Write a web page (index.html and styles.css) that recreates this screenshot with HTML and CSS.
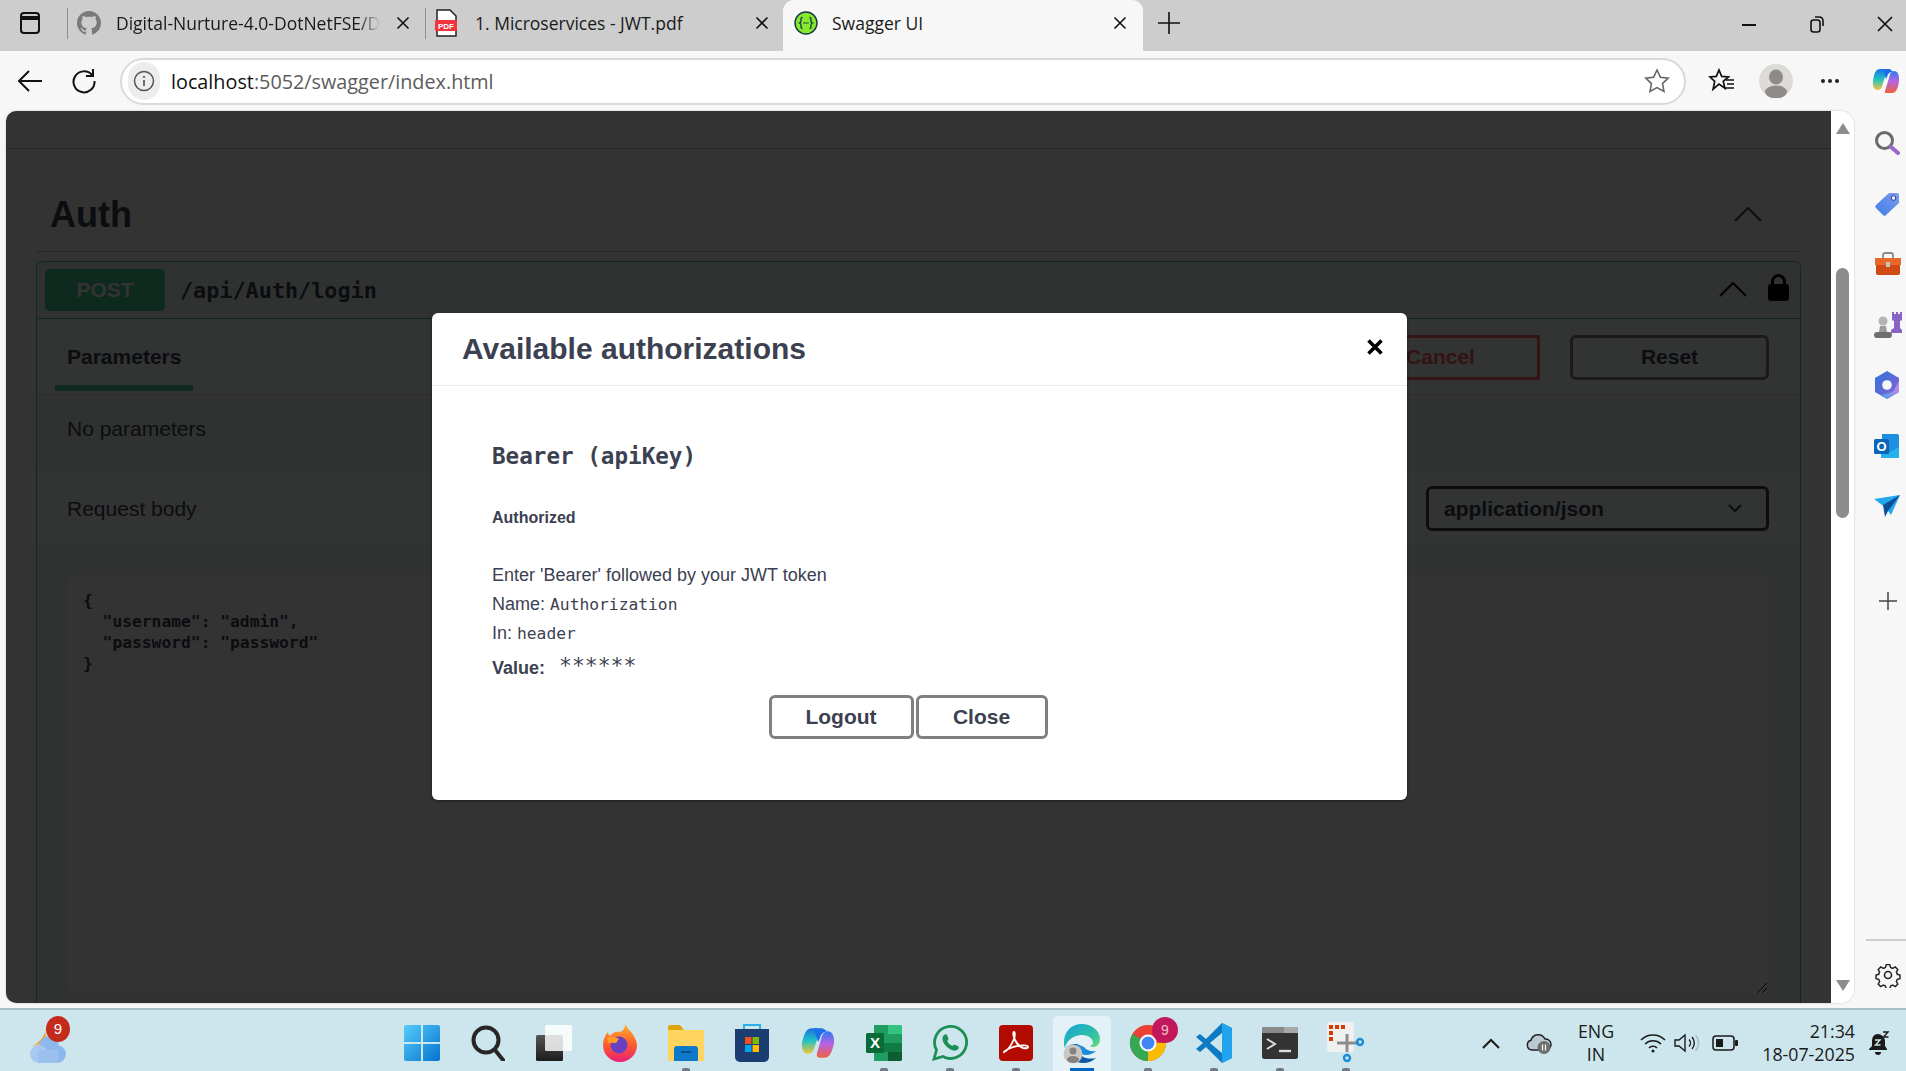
FILE: index.html
```html
<!DOCTYPE html>
<html lang="en">
<head>
  <meta charset="UTF-8" />
  <title>Swagger UI</title>
  <link rel="stylesheet" href="styles.css">
</head>
<body>

  <!-- Tab strip -->
  <div class="tabstrip">
    <div class="strip-btn">
      <svg width="22" height="24" viewBox="0 0 22 24" fill="none" stroke="#111" stroke-width="2"><rect x="2" y="2" width="18" height="20" rx="3"/><path d="M2 7h18" stroke-width="4"/></svg>
    </div>
    <div class="tab-sep"></div>
    <div class="tab tab-git">
      <svg class="tab-icon" width="24" height="24" viewBox="0 0 16 16" fill="#7a7a7a"><path d="M8 0C3.58 0 0 3.58 0 8c0 3.54 2.29 6.53 5.47 7.59.4.07.55-.17.55-.38 0-.19-.01-.82-.01-1.49-2.01.37-2.53-.49-2.69-.94-.09-.23-.48-.94-.82-1.13-.28-.15-.68-.52-.01-.53.63-.01 1.08.58 1.23.82.72 1.21 1.87.87 2.33.66.07-.52.28-.87.51-1.07-1.78-.2-3.64-.89-3.64-3.95 0-.87.31-1.59.82-2.15-.08-.2-.36-1.02.08-2.12 0 0 .67-.21 2.2.82.64-.18 1.32-.27 2-.27s1.36.09 2 .27c1.53-1.04 2.2-.82 2.2-.82.44 1.1.16 1.92.08 2.12.51.56.82 1.27.82 2.15 0 3.07-1.87 3.75-3.65 3.95.29.25.54.73.54 1.48 0 1.07-.01 1.93-.01 2.2 0 .21.15.46.55.38A8.013 8.013 0 0016 8c0-4.42-3.58-8-8-8z"/></svg>
      <span class="tab-title tab-fade">Digital-Nurture-4.0-DotNetFSE/D</span>
      <svg class="tab-x" width="14" height="14" viewBox="0 0 14 14" stroke="#111" stroke-width="1.6"><path d="M1.5 1.5l11 11M12.5 1.5l-11 11"/></svg>
    </div>
    <div class="tab-sep"></div>
    <div class="tab tab-pdf">
      <svg class="tab-icon" width="24" height="28" viewBox="0 0 24 28"><path d="M3 1h13l6 6v20H3z" fill="#fff" stroke="#222" stroke-width="1.5"/><rect x="1" y="11" width="22" height="11" rx="1" fill="#f0353f"/><text x="12" y="20" class="pdf-mark">PDF</text></svg>
      <span class="tab-title">1. Microservices - JWT.pdf</span>
      <svg class="tab-x" width="14" height="14" viewBox="0 0 14 14" stroke="#111" stroke-width="1.6"><path d="M1.5 1.5l11 11M12.5 1.5l-11 11"/></svg>
    </div>
    <div class="tab tab-active">
      <svg class="tab-icon" width="24" height="24" viewBox="0 0 24 24"><circle cx="12" cy="12" r="11" fill="#85ea2d" stroke="#173647" stroke-width="1.4"/><path d="M8.5 6.5c-2 0-1.5 2-1.5 3.5s-1.5 2-1.5 2 1.5.5 1.5 2-.5 3.5 1.5 3.5M15.5 6.5c2 0 1.5 2 1.5 3.5s1.5 2 1.5 2-1.5.5-1.5 2 .5 3.5-1.5 3.5" fill="none" stroke="#173647" stroke-width="1.3"/><path d="M9.5 12h5" stroke="#173647" stroke-width="1.6" stroke-dasharray="1.2 .8"/></svg>
      <span class="tab-title">Swagger UI</span>
      <svg class="tab-x" width="14" height="14" viewBox="0 0 14 14" stroke="#111" stroke-width="1.6"><path d="M1.5 1.5l11 11M12.5 1.5l-11 11"/></svg>
    </div>
    <svg class="new-tab" width="22" height="22" viewBox="0 0 22 22" stroke="#111" stroke-width="1.6"><path d="M11 0v22M0 11h22"/></svg>
    <div class="win-ctrls">
      <svg width="16" height="16" viewBox="0 0 16 16" stroke="#111" stroke-width="2"><path d="M1 9h14"/></svg>
      <svg width="16" height="18" viewBox="0 0 16 18" fill="none" stroke="#111" stroke-width="1.6"><rect x="2" y="5" width="9" height="12" rx="2.5"/><path d="M6 2h4c3 0 4 1 4 4v5"/></svg>
      <svg width="16" height="16" viewBox="0 0 16 16" stroke="#111" stroke-width="1.7"><path d="M1 1l14 14M15 1L1 15"/></svg>
    </div>
  </div>

  <!-- Toolbar -->
  <div class="toolbar">
    <svg class="tool-back" width="26" height="24" viewBox="0 0 26 24" fill="none" stroke="#111" stroke-width="2"><path d="M25 12H2M12 2L2 12l10 10"/></svg>
    <svg class="tool-reload" width="26" height="26" viewBox="0 0 26 26" fill="none" stroke="#111" stroke-width="2"><path d="M21 7a10.5 10.5 0 1 0 2.5 6"/><path d="M22 1v7h-7"/></svg>
    <div class="address">
      <div class="site-info">
        <svg width="22" height="22" viewBox="0 0 22 22" fill="none" stroke="#555" stroke-width="1.5"><circle cx="11" cy="11" r="9.5"/><path d="M11 10v6M11 6v2" stroke-width="1.7"/></svg>
      </div>
      <span class="url"><span class="url-host">localhost</span>:5052/swagger/index.html</span>
      <svg class="star" width="26" height="26" viewBox="0 0 26 26" fill="none" stroke="#666" stroke-width="1.6"><path d="M13 2l3.4 7.2 7.8 1-5.7 5.4 1.5 7.8-7-3.8-7 3.8 1.5-7.8L1.8 10.2l7.8-1z"/></svg>
    </div>
    <svg class="tool-fav" width="28" height="28" viewBox="0 0 28 28" fill="none" stroke="#111" stroke-width="1.7"><path d="M11 3l2.7 6.4 6.8.6-5.2 4.4 1.6 6.8L11 17l-5.9 5.2 1.6-7.8L2 10l6.3-.6z"/><path d="M18 13h8M19 17h7M17 21h9"/></svg>
    <div class="profile">
      <svg width="34" height="34" viewBox="0 0 34 34"><circle cx="17" cy="17" r="17" fill="#dcdbd8"/><ellipse cx="17" cy="13" rx="7" ry="7.5" fill="#8f8b86"/><ellipse cx="17" cy="28" rx="11" ry="6.5" fill="#8f8b86"/></svg>
    </div>
    <div class="more"><span></span><span></span><span></span></div>
    <svg class="copilot" width="34" height="34" viewBox="0 0 34 34" fill="none">
      <defs>
        <linearGradient id="cpA" x1="0" y1="0" x2="0" y2="1"><stop offset="0" stop-color="#1c6fe8"/><stop offset=".5" stop-color="#22c4c4"/><stop offset="1" stop-color="#f4c430"/></linearGradient>
        <linearGradient id="cpB" x1="0" y1="0" x2="0" y2="1"><stop offset="0" stop-color="#2a7cf0"/><stop offset=".45" stop-color="#b264e8"/><stop offset="1" stop-color="#f2603c"/></linearGradient>
      </defs>
      <path d="M11 5c-4 0-6 4-7 12-.6 5 1 9 5 9 3 0 4-3 5-7l4-12c.6-2-.5-2-2-2z" fill="url(#cpA)"/>
      <path d="M23 29c4 0 6-4 7-12 .6-5-1-10-5-10-3 0-4 3-5 7l-4 13c-.6 2 .5 2 2 2z" fill="url(#cpB)"/>
      <path d="M14 5h7l3 3c-3 0-5 1-6 5l-1 2z" fill="#1c6fe8"/>
    </svg>
  </div>

  <!-- Browser content -->
  <div class="viewport">
    <div class="frame">
      <div class="page">
        <div class="page-top"></div>
        <div class="wrapper">
          <div class="tag-row">
            <h3 class="tag-title">Auth</h3>
            <svg class="tag-chev" width="28" height="15" viewBox="0 0 28 15" fill="none" stroke="#3b4151" stroke-width="2"><path d="M1 14L14 1l13 13"/></svg>
          </div>
          <div class="opblock">
            <div class="op-summary">
              <span class="op-method">POST</span>
              <span class="op-path">/api/Auth/login</span>
              <svg class="op-chev" width="28" height="15" viewBox="0 0 28 15" fill="none" stroke="#000" stroke-width="2"><path d="M1 14L14 1l13 13"/></svg>
              <svg class="op-lock" width="21" height="27" viewBox="0 0 21 27"><path d="M4.5 12V7.5a6 6 0 0 1 12 0V12" fill="none" stroke="#000" stroke-width="3"/><rect y="10" width="21" height="17" rx="3" fill="#000"/></svg>
            </div>
            <div class="section-head params-head">
              <div class="params-tab">Parameters</div>
              <div class="btn-group">
                <button class="sw-btn sw-cancel">Cancel</button>
                <button class="sw-btn">Reset</button>
              </div>
            </div>
            <div class="no-params">No parameters</div>
            <div class="section-head body-head">
              <span>Request body</span>
              <div class="media-select">
                <span>application/json</span>
                <svg width="14" height="9" viewBox="0 0 14 9" fill="none" stroke="#3b4151" stroke-width="2.2"><path d="M1 1l6 6 6-6"/></svg>
              </div>
            </div>
            <div class="body-wrap">
              <div class="body-code">
<pre>{
  "username": "admin",
  "password": "password"
}</pre>
                <svg class="resize-grip" width="12" height="12" viewBox="0 0 12 12" stroke="#222" stroke-width="1"><path d="M1 11L11 1M6 11l5-5"/></svg>
              </div>
            </div>
          </div>
        </div>

        <div class="backdrop"></div>

        <!-- Auth dialog -->
        <div class="modal">
          <div class="modal-head">
            <h3 class="modal-title">Available authorizations</h3>
            <svg class="modal-x" width="18" height="18" viewBox="0 0 18 18" stroke="#000" stroke-width="3.6"><path d="M2.5 2.5l13 13M15.5 2.5l-13 13"/></svg>
          </div>
          <div class="modal-body">
            <h4 class="scheme">Bearer (apiKey)</h4>
            <h6 class="authorized">Authorized</h6>
            <p class="desc">Enter 'Bearer' followed by your JWT token</p>
            <p class="meta">Name: <code>Authorization</code></p>
            <p class="meta">In: <code>header</code></p>
            <div class="value-row">
              <label>Value:</label>
              <code class="stars">******</code>
            </div>
            <div class="modal-btns">
              <button class="modal-btn btn-logout">Logout</button>
              <button class="modal-btn btn-close">Close</button>
            </div>
          </div>
        </div>
      </div>

      <div class="scrollbar">
        <div class="arrow-up"></div>
        <div class="thumb"></div>
        <div class="arrow-down"></div>
      </div>
    </div>

    <!-- Edge sidebar -->
    <div class="sidebar">
      <div class="side-cell">
        <svg width="26" height="26" viewBox="0 0 26 26" fill="none"><circle cx="10.5" cy="10.5" r="8" stroke="#6b6b6b" stroke-width="3"/><path d="M17 17l7 6" stroke="#9a68cc" stroke-width="4" stroke-linecap="round"/></svg>
      </div>
      <div class="side-cell">
        <svg width="26" height="26" viewBox="0 0 26 26"><defs><linearGradient id="tagG" x1="0" y1="1" x2="1" y2="0"><stop offset="0" stop-color="#3f7fe6"/><stop offset="1" stop-color="#7f9bf0"/></linearGradient></defs><path d="M15 2h8a2 2 0 0 1 2 2v8L12 24a2 2 0 0 1-3 0l-7-7a2 2 0 0 1 0-3z" fill="url(#tagG)"/><circle cx="19.5" cy="7" r="2.3" fill="#e8ecff" stroke="#2e3f8f" stroke-width="1"/></svg>
      </div>
      <div class="side-cell">
        <svg width="28" height="24" viewBox="0 0 28 24"><path d="M9 6V3a2 2 0 0 1 2-2h6a2 2 0 0 1 2 2v3" fill="none" stroke="#8a8a8a" stroke-width="1.8"/><path d="M1 6h26v7H1z" fill="#e8672c"/><path d="M2 13h24v8a2 2 0 0 1-2 2H4a2 2 0 0 1-2-2z" fill="#cf4a14"/><rect x="12" y="10" width="4" height="5" fill="#c4c4c4"/></svg>
      </div>
      <div class="side-cell">
        <svg width="28" height="28" viewBox="0 0 28 28"><path d="M18 1h2v2h2V1h2v2h2V1h2v8l-2 1v7l2 2v3H17v-3l3-2v-7l-2-1z" fill="#8a64c4"/><circle cx="9" cy="10" r="4.5" fill="#b4b4b4"/><path d="M6 15h6l1 6H5z" fill="#9c9c9c"/><rect y="21" width="18" height="6" rx="3" fill="#6e6e6e"/></svg>
      </div>
      <div class="side-cell">
        <svg width="26" height="28" viewBox="0 0 26 28"><defs><linearGradient id="m3A" x1="0" y1="0" x2="1" y2="1"><stop offset="0" stop-color="#2f74d8"/><stop offset="1" stop-color="#8a5fd8"/></linearGradient><linearGradient id="m3B" x1="0" y1="0" x2="1" y2="0"><stop offset="0" stop-color="#3aa3e8"/><stop offset="1" stop-color="#c088e8"/></linearGradient></defs><path d="M13 0l12 7v14l-12 7-12-7V7z" fill="url(#m3A)"/><path d="M25 10v11l-12 7-6-3.5 12-4z" fill="url(#m3B)"/><circle cx="13" cy="14" r="4.8" fill="#f7f7f7"/></svg>
      </div>
      <div class="side-cell">
        <svg width="26" height="26" viewBox="0 0 26 26"><path d="M8 1h15a2 2 0 0 1 2 2v21a1 1 0 0 1-1 1H8z" fill="#1d8fe0"/><path d="M7 14l9 5 9-5v11H7z" fill="#27b0ee"/><rect y="6" width="15" height="15" rx="1.5" fill="#0a64b8"/><text x="7.5" y="17.5" class="outlook-mark">O</text></svg>
      </div>
      <div class="side-cell">
        <svg width="26" height="22" viewBox="0 0 26 22"><path d="M0 4l26-4-9 20-5-7z" fill="#22a8ee"/><path d="M26 0L9 10l2 12 3-6z" fill="#0b4f96"/></svg>
      </div>
      <div class="side-plus">
        <svg width="18" height="18" viewBox="0 0 18 18" stroke="#444" stroke-width="1.5"><path d="M9 0v18M0 9h18"/></svg>
      </div>
      <div class="side-line"></div>
      <div class="side-gear">
        <svg width="26" height="26" viewBox="0 0 26 26" fill="none" stroke="#222" stroke-width="1.6"><circle cx="13" cy="13" r="3.5"/><path d="M11 1.5h4l.8 3.2 2.4 1 2.9-1.6 2.8 2.8-1.6 2.9 1 2.4 3 .8v4l-3 .8-1 2.4 1.6 2.9-2.8 2.8-2.9-1.6-2.4 1-.8 3h-4l-.8-3-2.4-1-2.9 1.6-2.8-2.8 1.6-2.9-1-2.4-3-.8v-4l3-.8 1-2.4-1.6-2.9 2.8-2.8 2.9 1.6 2.4-1z" transform="translate(1.3 1.3) scale(.9)"/></svg>
      </div>
    </div>
  </div>

  <!-- Windows taskbar -->
  <div class="taskbar">
    <div class="weather">
      <svg width="38" height="38" viewBox="0 0 38 38"><path d="M18 0a11 11 0 0 0 3 15L1 21c7-2 15-10 17-21z" fill="#f6a623"/><circle cx="20" cy="20" r="10" fill="#8db8ee"/><circle cx="10" cy="28" r="9" fill="#a7c8f3"/><circle cx="28" cy="28" r="9" fill="#8db8ee"/><rect x="9" y="24" width="20" height="13" fill="#9cc1f1"/></svg>
      <span class="badge badge-red">9</span>
    </div>
    <div class="dock">
      <div class="dock-item">
        <svg width="36" height="36" viewBox="0 0 36 36"><defs><linearGradient id="winG" x1="0" y1="0" x2="1" y2="1"><stop offset="0" stop-color="#55cdfb"/><stop offset="1" stop-color="#0473cf"/></linearGradient></defs><path d="M2 0h15v17H0V2a2 2 0 0 1 2-2zM19 0h15a2 2 0 0 1 2 2v15H19zM0 19h17v17H2a2 2 0 0 1-2-2zM19 19h17v15a2 2 0 0 1-2 2H19z" fill="url(#winG)"/></svg>
      </div>
      <div class="dock-item">
        <svg width="34" height="36" viewBox="0 0 34 36" fill="none" stroke="#262626"><circle cx="15" cy="15" r="12.5" stroke-width="4"/><path d="M24 25l8 10" stroke-width="4" stroke-linecap="round"/></svg>
      </div>
      <div class="dock-item">
        <svg width="36" height="36" viewBox="0 0 36 36"><defs><linearGradient id="tvG" x1="0" y1="0" x2="0" y2="1"><stop offset="0" stop-color="#555"/><stop offset="1" stop-color="#1c1c1c"/></linearGradient></defs><rect y="10" width="27" height="26" rx="1.5" fill="url(#tvG)"/><rect x="9" y="0" width="27" height="26" rx="1.5" fill="#fff" fill-opacity=".82"/></svg>
      </div>
      <div class="dock-item">
        <svg width="34" height="38" viewBox="0 0 34 38"><defs><linearGradient id="ffG" x1="0" y1="0" x2="0" y2="1"><stop offset="0" stop-color="#ffb02e"/><stop offset=".55" stop-color="#ff5a2c"/><stop offset="1" stop-color="#e81e78"/></linearGradient></defs><path d="M22 0c2 3 3 5 7 9 4 6 5 10 5 12 0 10-8 17-17 17S0 31 0 21c0-5 2-10 5-13 0 2 1 3 2 4 2-3 6-5 9-4 3 0 6-3 6-8z" fill="url(#ffG)"/><circle cx="16" cy="21" r="8.5" fill="#6a3fc4"/><path d="M4 15c4-3 9-2 12 0l-3 4c-3 0-5-1-7 1z" fill="#ff9d28"/></svg>
      </div>
      <div class="dock-item">
        <svg width="36" height="36" viewBox="0 0 36 36"><path d="M0 2a2 2 0 0 1 2-2h10l4 5H0z" fill="#dfa511"/><path d="M0 5h36v31H0z" fill="#ffd45f"/><path d="M6 36V24a3 3 0 0 1 3-3h18a3 3 0 0 1 3 3v12z" fill="#0f79c9"/><rect x="13" y="26" width="10" height="2" fill="#0a4f8c"/></svg>
      </div>
      <div class="dock-item">
        <svg width="34" height="38" viewBox="0 0 34 38"><path d="M9 5V1h16v4" fill="none" stroke="#2cb2ea" stroke-width="2"/><path d="M0 5h34v28a5 5 0 0 1-5 5H5a5 5 0 0 1-5-5z" fill="#1b3d72"/><path d="M10 13h6.5v7H10z" fill="#f25022"/><path d="M17.5 13H24v7h-6.5z" fill="#7fba00"/><path d="M10 21h6.5v7H10z" fill="#00a4ef"/><path d="M17.5 21H24v7h-6.5z" fill="#ffb900"/></svg>
      </div>
      <div class="dock-item">
        <svg width="36" height="36" viewBox="0 0 34 34" fill="none"><defs><linearGradient id="cpC" x1="0" y1="0" x2="0" y2="1"><stop offset="0" stop-color="#1c6fe8"/><stop offset=".5" stop-color="#22c4c4"/><stop offset="1" stop-color="#f4c430"/></linearGradient><linearGradient id="cpD" x1="0" y1="0" x2="0" y2="1"><stop offset="0" stop-color="#2a7cf0"/><stop offset=".45" stop-color="#b264e8"/><stop offset="1" stop-color="#f2603c"/></linearGradient></defs><path d="M11 3c-5 0-7 5-9 13-1 6 1 11 6 11 3 0 5-3 6-7l4-12c.6-2-.5-5-2-5z" fill="url(#cpC)"/><path d="M23 31c5 0 7-5 9-13 1-6-1-12-6-12-3 0-5 3-6 7l-4 14c-.6 2 .5 4 2 4z" fill="url(#cpD)"/><path d="M13 3h8l5 3c-3 0-6 2-7 6l-2 4z" fill="#1c6fe8"/></svg>
      </div>
      <div class="dock-item">
        <svg width="36" height="36" viewBox="0 0 36 36"><path d="M8 0h26a2 2 0 0 1 2 2v32a2 2 0 0 1-2 2H8z" fill="#1f9d60"/><path d="M22 0h12a2 2 0 0 1 2 2v7H22z" fill="#33c481"/><path d="M8 18h28v9H8z" fill="#107c41"/><path d="M22 27h14v7a2 2 0 0 1-2 2H22z" fill="#0d5c32"/><rect y="8" width="18" height="20" rx="1.5" fill="#0b6b38"/><text x="9" y="23" class="excel-mark">X</text></svg>
      </div>
      <div class="dock-item">
        <svg width="36" height="36" viewBox="0 0 36 36" fill="none"><path d="M2 34l2.5-9A16 16 0 1 1 11 31.5z" stroke="#1b8f55" stroke-width="2.8"/><path d="M12 10c1-1 2.5-1 3 0l1.5 3.5c.2.6-.2 1.2-1.3 2.5 1 2.2 3 4 5 5 1.3-1 2-1.5 2.6-1.3l3.2 1.6c1 .6 1 2 0 3-1.8 1.8-4.5 1.7-7.5.3-3-1.5-6-4.5-7.3-7.5-1.2-2.8-1-5.5.8-7.1z" fill="#1b8f55"/></svg>
      </div>
      <div class="dock-item">
        <svg width="34" height="36" viewBox="0 0 34 36"><rect width="34" height="36" rx="4" fill="#b30b00"/><path d="M5 27c3-1 7-6 10-13 1-3 1-7 0-7s-1 4 1 8c2 4 5 7 8 8 2 .5 5 .5 5-1 0-2-6-2-11-1-6 1-13 5-13 6z" fill="none" stroke="#fff" stroke-width="1.9"/></svg>
      </div>
      <div class="dock-item dock-active">
        <svg width="38" height="42" viewBox="0 0 38 42"><defs><linearGradient id="edG" x1="0" y1="0" x2="1" y2="1"><stop offset="0" stop-color="#11a3d8"/><stop offset=".7" stop-color="#37c5a0"/><stop offset="1" stop-color="#6fe36a"/></linearGradient></defs><path d="M19 1C8 1 1 9 1 19c0 2 0 4 1 6 2-8 9-13 17-13 7 0 11 4 11 8 0 1-1 2-3 3 3 2 10 1 10-7C37 8 29 1 19 1z" fill="url(#edG)"/><path d="M3 26c2 9 9 14 17 14 5 0 10-2 13-5-4 1-11 1-14-2-4-3-5-8-5-12-5 0-10 1-11 5z" fill="#0c59a4"/><path d="M14 21c0 6 3 11 9 11 4 0 8-2 10-4-5 1-10-1-12-4z" fill="#1a8cd8"/><circle cx="10" cy="31" r="9.5" fill="#c9c7c4"/><circle cx="10" cy="28" r="3.5" fill="#85817c"/><ellipse cx="10" cy="36.5" rx="6" ry="3.5" fill="#85817c"/></svg>
      </div>
      <div class="dock-item">
        <span class="chrome-wrap">
          <svg width="38" height="38" viewBox="0 0 38 38"><circle cx="19" cy="19" r="18" fill="#ea4335"/><path d="M19 19L3.4 10A18 18 0 0 0 19 37l9-15z" fill="#34a853"/><path d="M19 19h18A18 18 0 0 1 19 37z" fill="#fbbc04"/><circle cx="19" cy="19" r="8.5" fill="#fff"/><circle cx="19" cy="19" r="6.5" fill="#4285f4"/></svg>
          <span class="badge badge-pink">9</span>
        </span>
      </div>
      <div class="dock-item">
        <svg width="36" height="40" viewBox="0 0 36 40"><path d="M26 0l10 5v30l-10 5L10 24l-6 5-4-3 7-6-7-6 4-3 6 5z" fill="#0d7ac4"/><path d="M26 10v20l-12-10zM26 0l10 5v30l-10 5z" fill="#22a3ee"/><path d="M26 10v20l-12-10z" fill="#cde6ed"/></svg>
      </div>
      <div class="dock-item">
        <svg width="36" height="32" viewBox="0 0 36 32"><rect width="36" height="32" rx="2.5" fill="#333"/><path d="M0 2.5A2.5 2.5 0 0 1 2.5 0H22v6H0z" fill="#8a8a8a"/><path d="M22 0h11.5A2.5 2.5 0 0 1 36 2.5V6H22z" fill="#a8a8a8"/><path d="M5 12l8 5-8 5" fill="none" stroke="#ddd" stroke-width="2"/><path d="M17 24h12" stroke="#ddd" stroke-width="2.4"/></svg>
      </div>
      <div class="dock-item">
        <svg width="38" height="42" viewBox="0 0 38 42" fill="none"><rect width="27" height="30" rx="3" fill="#f0f0f0"/><path d="M2 3h4v4H2zM8 3h4v4H8zM14 3h4v4h-4zM2 9h4v4H2zM2 15h4v4H2z" fill="#d83b01"/><path d="M10 21h22" stroke="#8c8c8c" stroke-width="3"/><path d="M20 12v18" stroke="#8c8c8c" stroke-width="3"/><circle cx="33" cy="20" r="3" stroke="#1a8cd8" stroke-width="2.4"/><circle cx="20" cy="36" r="3" stroke="#1a8cd8" stroke-width="2.4"/></svg>
      </div>
    </div>
    <div class="tray">
      <div class="tray-chev">
        <svg width="18" height="11" viewBox="0 0 18 11" fill="none" stroke="#1a1a1a" stroke-width="2"><path d="M1 10l8-8 8 8"/></svg>
      </div>
      <div class="tray-cloud">
        <svg width="26" height="22" viewBox="0 0 26 22"><path d="M6 18a5 5 0 0 1-1-9.8A7.5 7.5 0 0 1 19 7a5.5 5.5 0 0 1 1 11z" fill="#b8cbd0" stroke="#222" stroke-width="1.5"/><circle cx="18" cy="15.5" r="6.5" fill="#6d6d6d"/><path d="M16.5 12.5v6M19.5 12.5v6" stroke="#fff" stroke-width="1.3"/></svg>
      </div>
      <div class="tray-lang"><span>ENG</span><span>IN</span></div>
      <div class="tray-wifi">
        <svg width="26" height="20" viewBox="0 0 26 20" fill="none" stroke="#1a1a1a" stroke-width="1.6"><path d="M1 7a17 17 0 0 1 24 0M5 11a11.5 11.5 0 0 1 16 0M9 15a5.5 5.5 0 0 1 8 0"/><circle cx="13" cy="18" r="1.5" fill="#1a1a1a" stroke="none"/></svg>
      </div>
      <div class="tray-sound">
        <svg width="26" height="20" viewBox="0 0 26 20" fill="none" stroke="#1a1a1a" stroke-width="1.4"><path d="M1 7v6h4l6 5V2L5 7z"/><path d="M15 6.5a5 5 0 0 1 0 7M18 4a9 9 0 0 1 0 12"/><path d="M21.5 2a12 12 0 0 1 0 16" stroke="#a9bcc1"/></svg>
      </div>
      <div class="tray-batt">
        <svg width="26" height="16" viewBox="0 0 26 16"><rect x="1" y="1" width="21" height="14" rx="3" fill="none" stroke="#1a1a1a" stroke-width="1.5"/><rect x="4" y="4" width="7" height="8" fill="#1a1a1a"/><rect x="23" y="5" width="3" height="6" rx="1" fill="#1a1a1a"/></svg>
      </div>
      <div class="clock"><span>21:34</span><span>18-07-2025</span></div>
      <div class="tray-bell">
        <svg width="22" height="24" viewBox="0 0 22 24"><path d="M10 3c-4 0-6 3-6 7v5l-3 3v1h18v-1l-2-3v-5c0-3-3-7-7-7z" fill="#1a1a1a"/><path d="M7 21h6a3 3 0 0 1-6 0z" fill="#1a1a1a"/><path d="M7 9h5l-4.5 5h5" fill="none" stroke="#cde6ed" stroke-width="1.4"/><path d="M15 1h5l-4.5 5h5" fill="none" stroke="#1a1a1a" stroke-width="1.4"/></svg>
      </div>
    </div>
  </div>

</body>
</html>
```

FILE: styles.css
```css
* {
  box-sizing: border-box;
}

body {
  margin: 0;
  width: 1906px;
  height: 1071px;
  overflow: hidden;
  display: flex;
  flex-direction: column;
  background: #f7f7f7;
  font-family: "Liberation Sans", Arial, sans-serif;
  color: #3b4151;
}

svg {
  display: block;
  flex-shrink: 0;
}

/* ---- tab strip ---- */
.tabstrip {
  height: 51px;
  flex-shrink: 0;
  display: flex;
  align-items: center;
  background: #cdcdcd;
  font-family: "Open Sans", sans-serif;
  font-size: 17.5px;
  color: #1a1a1a;
}

.strip-btn {
  width: 67px;
  padding-left: 19px;
  margin-top: -5px;
}

.tab-sep {
  width: 1px;
  height: 31px;
  background: #8e8e8e;
  margin-top: -5px;
}

.tab {
  height: 51px;
  display: flex;
  align-items: center;
  position: relative;
  padding-bottom: 5px;
}

.tab-git {
  width: 357px;
  padding-left: 9px;
}

.tab-pdf {
  width: 357px;
  padding-left: 8px;
}

.tab-active {
  width: 360px;
  padding-left: 11px;
  background: #f7f7f7;
  border-radius: 11px 11px 0 0;
}

.tab-title {
  margin-left: 14px;
  white-space: nowrap;
}

.tab-git .tab-title {
  margin-left: 15px;
}

.tab-pdf .tab-title {
  margin-left: 17px;
}

.tab-fade {
  -webkit-mask-image: linear-gradient(to right, #000 92%, transparent 100%);
  mask-image: linear-gradient(to right, #000 92%, transparent 100%);
}

.tab-x {
  position: absolute;
  right: 14px;
  top: 16px;
}

.tab-git .tab-x {
  right: 15px;
}

.tab-active .tab-x {
  right: 16px;
}

.new-tab {
  margin-left: 15px;
  margin-top: -6px;
}

.win-ctrls {
  margin-left: auto;
  display: flex;
  align-items: center;
  gap: 52px;
  padding-right: 13px;
  margin-top: -3px;
}

/* ---- toolbar ---- */
.toolbar {
  height: 60px;
  flex-shrink: 0;
  display: flex;
  align-items: center;
  background: #f7f7f7;
  padding-left: 17px;
}

.tool-reload {
  margin-left: 28px;
}

.address {
  margin-left: 23px;
  width: 1566px;
  height: 47px;
  flex-shrink: 0;
  display: flex;
  align-items: center;
  background: #fff;
  border: 2px solid #d9d9d9;
  border-radius: 24px;
  padding-left: 6px;
  font-family: "Open Sans", sans-serif;
  font-size: 19.8px;
  color: #5c5c5c;
}

.site-info {
  width: 32px;
  height: 38px;
  display: flex;
  align-items: center;
  justify-content: center;
  background: #ededed;
  border-radius: 16px;
}

.url {
  margin-left: 11px;
}

.url-host {
  color: #111;
}

.star {
  margin-left: auto;
  margin-right: 14px;
}

.tool-fav {
  margin-left: 22px;
}

.profile {
  margin-left: 23px;
}

.more {
  margin-left: 28px;
  display: flex;
  gap: 3px;
}

.more span {
  width: 4px;
  height: 4px;
  border-radius: 50%;
  background: #222;
}

.copilot {
  margin-left: 30px;
}

/* ---- content area ---- */
.viewport {
  height: 897px;
  flex-shrink: 0;
  display: flex;
}

.frame {
  margin-left: 6px;
  width: 1848px;
  height: 892px;
  display: flex;
  background: #fff;
  border-radius: 10px 14px 14px 10px;
  box-shadow: 0 0 2px rgba(0, 0, 0, .25);
  overflow: hidden;
}

.page {
  width: 1825px;
  height: 892px;
  position: relative;
  overflow: hidden;
  background: #fff;
}

.page-top {
  height: 38px;
  border-bottom: 1px solid rgba(59, 65, 81, .3);
}

.wrapper {
  margin: 0 30px 0 30px;
}

.tag-row {
  height: 103px;
  display: flex;
  align-items: flex-end;
  justify-content: space-between;
  border-bottom: 1px solid rgba(59, 65, 81, .3);
}

.tag-title {
  margin: 0 0 16px 14px;
  font-size: 36px;
  line-height: 41px;
  font-weight: 700;
}

.tag-chev {
  margin: 0 39px 29px 0;
}

.opblock {
  margin-top: 9px;
  height: 800px;
  background: rgba(73, 204, 144, .1);
  border: 1px solid #49cc90;
  border-radius: 6px 6px 0 0;
}

.op-summary {
  height: 57px;
  display: flex;
  align-items: center;
  padding-left: 8px;
  border-bottom: 1px solid #49cc90;
}

.op-method {
  width: 120px;
  height: 42px;
  display: flex;
  align-items: center;
  justify-content: center;
  background: #49cc90;
  border-radius: 5px;
  color: #fff;
  font-size: 21px;
  font-weight: 700;
}

.op-path {
  margin-left: 15px;
  font-family: "DejaVu Sans Mono", monospace;
  font-size: 21.8px;
  font-weight: 700;
}

.op-chev {
  margin-left: auto;
  margin-top: -1px;
}

.op-lock {
  margin: -6px 11px 0 21px;
}

.section-head {
  display: flex;
  align-items: center;
  background: rgba(255, 255, 255, .8);
}

.params-head {
  height: 76px;
  padding: 0 31px 0 18px;
  border-bottom: 1px solid rgba(59, 65, 81, .15);
}

.params-tab {
  width: 138px;
  height: 72px;
  padding: 20px 0 0 12px;
  font-size: 21px;
  line-height: 36px;
  font-weight: 700;
  border-bottom: 6px solid #49cc90;
  align-self: flex-start;
}

.btn-group {
  margin-left: auto;
  display: flex;
  gap: 30px;
  margin-top: 1px;
}

.sw-btn {
  width: 199px;
  height: 45px;
  background: transparent;
  border: 3px solid #808080;
  border-radius: 6px;
  font-family: inherit;
  font-size: 21px;
  font-weight: 700;
  color: #3b4151;
}

.sw-cancel {
  border-color: #ff6060;
  border-radius: 0;
  color: #ff6060;
}

.no-params {
  height: 76px;
  padding: 22px 0 0 30px;
  font-size: 21px;
  line-height: 24px;
}

.body-head {
  height: 73px;
  justify-content: space-between;
  padding: 2px 31px 0 30px;
  font-size: 21px;
}

.media-select {
  width: 343px;
  height: 45px;
  display: flex;
  align-items: center;
  justify-content: space-between;
  padding: 0 24px 0 15px;
  border: 3px solid #41444e;
  border-radius: 6px;
  font-weight: 700;
}

.body-wrap {
  padding: 31px 31px 0 30px;
}

.body-code {
  height: 419px;
  position: relative;
  background: #fff;
  border-radius: 6px;
  padding: 15px 16px;
}

.body-code pre {
  margin: 0;
  font-family: "DejaVu Sans Mono", monospace;
  font-size: 16.3px;
  line-height: 21px;
  font-weight: 700;
  color: #3b4151;
}

.resize-grip {
  position: absolute;
  right: 1px;
  bottom: 0;
}

.backdrop {
  position: absolute;
  inset: 0;
  background: rgba(0, 0, 0, .8);
}

/* ---- auth dialog ---- */
.modal {
  position: absolute;
  left: 426px;
  top: 202px;
  width: 975px;
  height: 487px;
  background: #fff;
  border-radius: 6px;
  box-shadow: 0 1px 3px rgba(0, 0, 0, .4);
}

.modal-head {
  height: 73px;
  display: flex;
  align-items: center;
  justify-content: space-between;
  padding: 0 23px 5px 30px;
  border-bottom: 1px solid #ebebeb;
}

.modal-title {
  margin: 5px 0 0;
  font-size: 30px;
  font-weight: 700;
}

.modal-body {
  padding: 0 30px 0 60px;
  font-size: 18px;
}

.scheme {
  margin: 0;
  padding-top: 55px;
  font-family: "DejaVu Sans Mono", monospace;
  font-size: 22.6px;
  line-height: 30px;
  font-weight: 700;
}

.authorized {
  margin: 37px 0 0;
  font-size: 16px;
  line-height: 20px;
  font-weight: 700;
}

.desc {
  margin: 33px 0 0;
  line-height: 29px;
}

.meta {
  margin: 0;
  line-height: 29px;
}

.meta code {
  font-family: "DejaVu Sans Mono", monospace;
  font-size: 16.3px;
  font-weight: 400;
}

.value-row {
  margin-top: 6px;
  display: flex;
  align-items: flex-start;
  height: 29px;
}

.value-row label {
  font-weight: 700;
  line-height: 29px;
}

.stars {
  margin-left: 14px;
  font-family: "DejaVu Sans Mono", monospace;
  font-size: 21.4px;
  line-height: 24px;
}

.modal-btns {
  margin-top: 12px;
  display: flex;
  justify-content: center;
  gap: 2px;
  padding-right: 53px;
}

.modal-btn {
  height: 44px;
  background: #fff;
  border: 3px solid #808080;
  border-radius: 6px;
  font-family: inherit;
  font-size: 21px;
  font-weight: 700;
  color: #3b4151;
}

.btn-logout {
  width: 145px;
}

.btn-close {
  width: 132px;
}

/* ---- page scrollbar ---- */
.scrollbar {
  width: 23px;
  height: 892px;
  position: relative;
  background: #fff;
}

.thumb {
  position: absolute;
  left: 5px;
  top: 157px;
  width: 13px;
  height: 250px;
  border-radius: 7px;
  background: #8c8c8c;
}

.arrow-up,
.arrow-down {
  position: absolute;
  left: 5px;
  width: 0;
  height: 0;
  border-left: 7.5px solid transparent;
  border-right: 7.5px solid transparent;
}

.arrow-up {
  top: 12px;
  border-bottom: 11px solid #8c8c8c;
}

.arrow-down {
  bottom: 12px;
  border-top: 11px solid #8c8c8c;
}

/* ---- edge sidebar ---- */
.sidebar {
  width: 52px;
  height: 897px;
  display: flex;
  flex-direction: column;
  padding-top: 2px;
  padding-left: 12px;
}

.side-cell {
  height: 60.5px;
  width: 42px;
  padding-left: 7px;
  display: flex;
  align-items: center;
  margin-left: 1px;
}

.side-plus {
  margin-top: 55px;
  height: 18px;
  padding-left: 13px;
}

.side-line {
  margin-top: auto;
  margin-bottom: 21px;
  width: 40px;
  height: 2px;
  background: #cfcfcf;
}

.side-gear {
  height: 26px;
  margin-bottom: 20px;
  padding-left: 9px;
}

/* ---- taskbar ---- */
.taskbar {
  height: 63px;
  flex-shrink: 0;
  display: flex;
  align-items: center;
  background: #cde6ed;
  border-top: 2px solid #a8bdc1;
  position: relative;
}

.weather {
  width: 389px;
  padding-left: 29px;
  padding-top: 8px;
  position: relative;
}

.badge {
  position: absolute;
  display: flex;
  align-items: center;
  justify-content: center;
  border-radius: 50%;
  color: #fff;
  font-size: 14px;
}

.badge-red {
  left: 46px;
  top: -2px;
  width: 24px;
  height: 26px;
  background: #c42b1c;
  font-size: 15px;
}

.dock {
  display: flex;
  height: 61px;
}

.dock-item {
  width: 66px;
  height: 61px;
  padding-top: 5px;
  display: flex;
  align-items: center;
  justify-content: center;
  position: relative;
}

.dock-item:nth-child(5)::after,
.dock-item:nth-child(8)::after,
.dock-item:nth-child(9)::after,
.dock-item:nth-child(10)::after,
.dock-item:nth-child(12)::after,
.dock-item:nth-child(13)::after,
.dock-item:nth-child(14)::after,
.dock-item:nth-child(15)::after {
  content: "";
  position: absolute;
  bottom: 0;
  left: 29px;
  width: 8px;
  height: 3px;
  border-radius: 2px 2px 0 0;
  background: #6f7b80;
}

.dock-active {
  background: #e4f2f7;
  border-radius: 5px 5px 0 0;
  margin: 6px 4px 0;
  width: 58px;
  height: 55px;
  padding-top: 0;
}

.dock-active::after {
  content: "";
  position: absolute;
  bottom: 0;
  left: 17px;
  width: 24px;
  height: 3px;
  background: #0067c0;
}

.chrome-wrap {
  position: relative;
}

.badge-pink {
  right: -11px;
  top: -7px;
  width: 26px;
  height: 26px;
  background: #c2185b;
  color: #f0c0d0;
}

.tray {
  margin-left: auto;
  width: 435px;
  padding-top: 5px;
  display: flex;
  align-items: center;
  font-family: "Open Sans", sans-serif;
  font-size: 17.8px;
  color: #1a1a1a;
}

.tray-chev,
.tray-cloud,
.tray-wifi,
.tray-sound,
.tray-batt,
.tray-bell {
  display: flex;
  justify-content: center;
}

.tray-chev {
  width: 40px;
}

.tray-cloud {
  width: 56px;
}

.tray-lang {
  width: 58px;
  display: flex;
  flex-direction: column;
  align-items: center;
  line-height: 23px;
}

.tray-wifi {
  width: 42px;
  margin-left: 7px;
}

.tray-sound {
  width: 26px;
}

.tray-batt {
  width: 50px;
}

.clock {
  width: 105px;
  display: flex;
  flex-direction: column;
  align-items: flex-end;
  line-height: 23px;
}

.tray-bell {
  width: 47px;
}

/* ---- small marks inside icons ---- */
.pdf-mark,
.outlook-mark,
.excel-mark {
  font-family: "Liberation Sans", sans-serif;
  font-weight: 700;
  fill: #fff;
  text-anchor: middle;
}

.pdf-mark {
  font-size: 8px;
}

.outlook-mark {
  font-size: 13px;
}

.excel-mark {
  font-size: 15px;
}
```
